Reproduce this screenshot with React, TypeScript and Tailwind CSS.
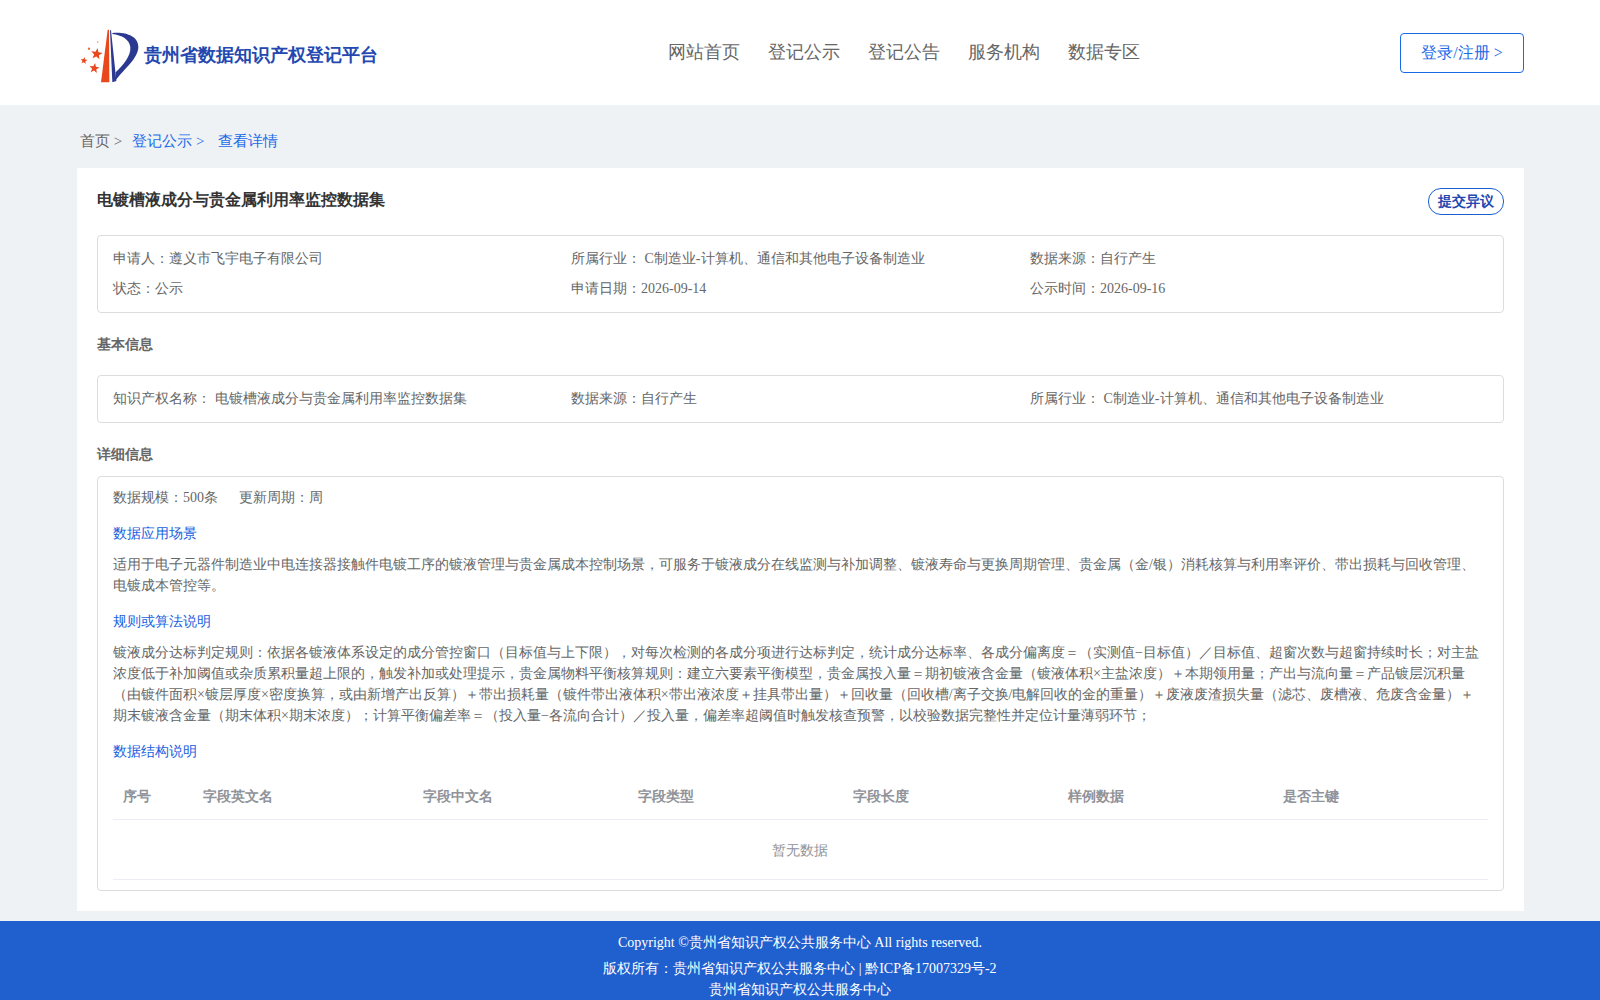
const font = "[font-family:'Liberation_Serif',serif]";

function Star({ cx, cy, r, fill = "#e8481c" }: { cx: number; cy: number; r: number; fill?: string }) {
  const pts = Array.from({ length: 10 }, (_, i) => {
    const a = -Math.PI / 2 + 0.15 + (i * Math.PI) / 5;
    const rr = i % 2 === 0 ? r : r * 0.42;
    return `${(cx + rr * Math.cos(a)).toFixed(1)},${(cy + rr * Math.sin(a)).toFixed(1)}`;
  }).join(" ");
  return <polygon points={pts} fill={fill} />;
}

function Logo() {
  return (
    <svg width="66" height="60" viewBox="0 0 198 180" className="shrink-0">
      <path d="M98 20 L102 20 L103 178 L78 178 Z" fill="#e8481c" />
      <path d="M105 22 L108 22 L124 174 L112 178 Z" fill="#2b3990" />
      <path d="M112 30 C150 26 190 38 190 72 C190 105 150 135 122 172 L122 148 C145 125 168 100 166 72 C164 50 140 36 112 33 Z" fill="#2b3990" />
      <Star cx={65} cy={93} r={18} />
      <Star cx={58} cy={136} r={16} />
      <Star cx={27} cy={113} r={11} />
      <circle cx="42" cy="77" r="3.5" fill="#ee6a3c" />
      <circle cx="68" cy="57" r="2.500" fill="#f08a60" />
    </svg>
  );
}

function Label({ children }: { children: React.ReactNode }) {
  return <div className="text-[14px] leading-[21px] text-[#2060e0]">{children}</div>;
}

const cols = ["序号", "字段英文名", "字段中文名", "字段类型", "字段长度", "样例数据", "是否主键"];

export default function App() {
  return (
    <div className={`${font} min-h-[1000px] bg-[#eff2f5] text-[14px] text-[#666]`}>
      <header className="flex h-[105px] items-center justify-between bg-white pl-[75px] pr-[76px]">
        <div className="flex w-[400px] items-center">
          <Logo />
          <span className="ml-[3px] pt-[5px] text-[18px] font-bold text-[#2447b0]">贵州省数据知识产权登记平台</span>
        </div>
        <nav className="flex gap-[28px] pr-[68px] text-[18px] text-[#666]">
          <span>网站首页</span>
          <span>登记公示</span>
          <span>登记公告</span>
          <span>服务机构</span>
          <span>数据专区</span>
        </nav>
        <button className="h-[40px] w-[124px] rounded-[4px] border border-[#1a6ae8] bg-white pt-[1px] text-[16px] text-[#1a6ae8]">登录/注册 &gt;</button>
      </header>

      <main className="ml-[77px] w-[1447px] pb-[10px]">
        <div className="flex h-[63px] items-center pl-[3px] pt-[10px] text-[15px]">
          <span className="text-[#666]">首页 &gt;</span>
          <span className="ml-[10px] text-[#1a6ae8]">登记公示 &gt;</span>
          <span className="ml-[14px] text-[#1a6ae8]">查看详情</span>
        </div>
        <section className="bg-white px-[20px] pt-[20px] pb-[20px]">
          <div className="flex items-start justify-between">
            <h1 className="text-[16px] font-bold text-[#333]">电镀槽液成分与贵金属利用率监控数据集</h1>
            <span className="flex h-[27px] w-[76px] items-center justify-center rounded-[13px] border border-[#1a5fd0] text-[14px] font-bold text-[#2447b0]">提交异议</span>
          </div>
          <div className="mt-[20px] grid grid-cols-[458px_459px_1fr] gap-y-[9px] rounded-[4px] border border-[#ddd] px-[15px] pt-[12px] pb-[13px] leading-[21px]">
            <div>申请人：遵义市飞宇电子有限公司</div>
            <div>所属行业： C制造业-计算机、通信和其他电子设备制造业</div>
            <div>数据来源：自行产生</div>
            <div>状态：公示</div>
            <div>申请日期：2026-09-14</div>
            <div>公示时间：2026-09-16</div>
          </div>
          <h2 className="mt-[21px] text-[14px] font-bold leading-[21px] text-[#666]">基本信息</h2>
          <div className="mt-[20px] grid grid-cols-[458px_459px_1fr] rounded-[4px] border border-[#ddd] px-[15px] pt-[11px] pb-[12px] leading-[23px]">
            <div>知识产权名称： 电镀槽液成分与贵金属利用率监控数据集</div>
            <div>数据来源：自行产生</div>
            <div>所属行业： C制造业-计算机、通信和其他电子设备制造业</div>
          </div>
          <h2 className="mt-[21px] text-[14px] font-bold leading-[21px] text-[#666]">详细信息</h2>
          <div className="mt-[11px] rounded-[4px] border border-[#ddd] px-[15px] pt-[10px] pb-[10px] leading-[21px]">
            <div className="flex gap-[21px]">
              <span>数据规模：500条</span>
              <span>更新周期：周</span>
            </div>
            <div className="mt-[15px]"><Label>数据应用场景</Label></div>
            <p className="mt-[10px]">适用于电子元器件制造业中电连接器接触件电镀工序的镀液管理与贵金属成本控制场景，可服务于镀液成分在线监测与补加调整、镀液寿命与更换周期管理、贵金属（金/银）消耗核算与利用率评价、带出损耗与回收管理、电镀成本管控等。</p>
            <div className="mt-[15px]"><Label>规则或算法说明</Label></div>
            <p className="mt-[10px]">镀液成分达标判定规则：依据各镀液体系设定的成分管控窗口（目标值与上下限），对每次检测的各成分项进行达标判定，统计成分达标率、各成分偏离度＝（实测值−目标值）／目标值、超窗次数与超窗持续时长；对主盐浓度低于补加阈值或杂质累积量超上限的，触发补加或处理提示，贵金属物料平衡核算规则：建立六要素平衡模型，贵金属投入量＝期初镀液含金量（镀液体积×主盐浓度）＋本期领用量；产出与流向量＝产品镀层沉积量（由镀件面积×镀层厚度×密度换算，或由新增产出反算）＋带出损耗量（镀件带出液体积×带出液浓度＋挂具带出量）＋回收量（回收槽/离子交换/电解回收的金的重量）＋废液废渣损失量（滤芯、废槽液、危废含金量）＋期末镀液含金量（期末体积×期末浓度）；计算平衡偏差率＝（投入量−各流向合计）／投入量，偏差率超阈值时触发核查预警，以校验数据完整性并定位计量薄弱环节；</p>
            <div className="mt-[15px]"><Label>数据结构说明</Label></div>
            <div className="mt-[1px]">
              <div className="grid h-[57px] grid-cols-[80px_220px_215px_215px_215px_215px_1fr] items-center border-b border-[#ebeef5] pl-[10px] pt-[10px] font-bold text-[#909399]">
                {cols.map((c) => <div key={c}>{c}</div>)}
              </div>
              <div className="flex h-[60px] items-center justify-center border-b border-[#ebeef5] pt-[1px] pr-[2px] text-[#909399]">暂无数据</div>
            </div>
          </div>
        </section>
      </main>

      <footer className="h-[79px] bg-[#2060ce] pt-[11px] text-center text-[14px] leading-[21px] text-white">
        <div>Copyright ©贵州省知识产权公共服务中心 All rights reserved.</div>
        <div className="mt-[5px]">版权所有：贵州省知识产权公共服务中心 | 黔ICP备17007329号-2</div>
        <div>贵州省知识产权公共服务中心</div>
      </footer>
    </div>
  );
}
